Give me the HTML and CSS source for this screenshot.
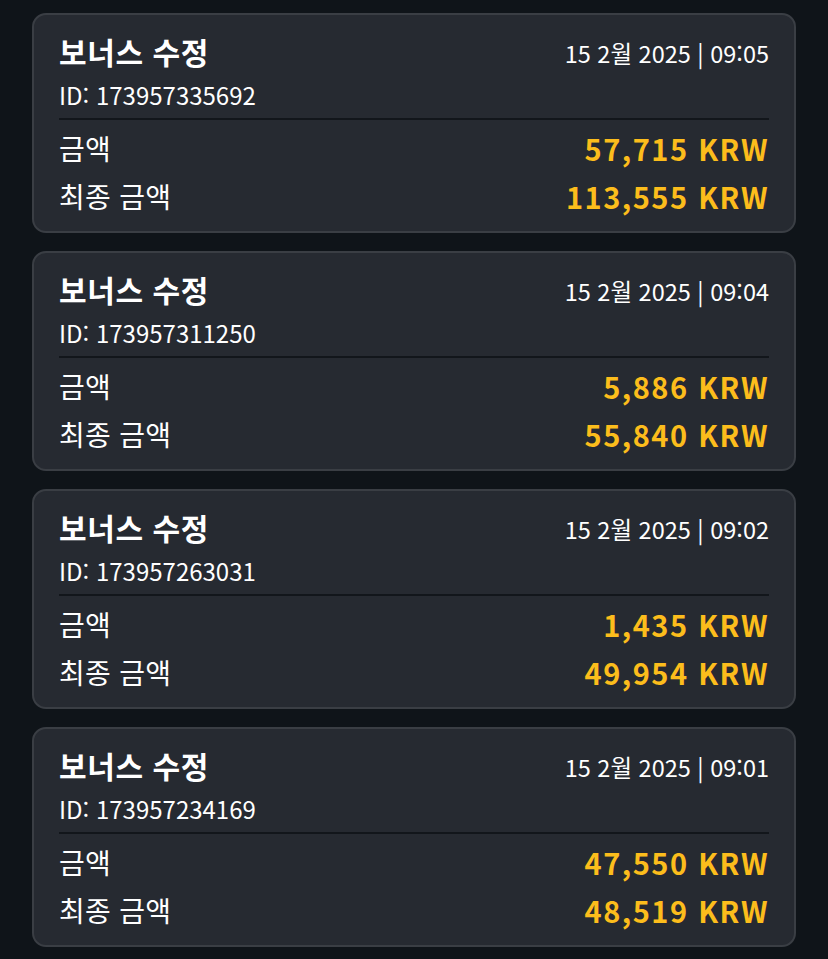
FILE: index.html
```
<html lang="ko">
<head>
    <meta charset="UTF-8">
    <title>보너스 내역</title>
    <link rel="stylesheet" href="styles.css">
</head>
<body>
<div class="list">
    <div class="card">
        <div class="head">
            <div class="title">보너스 수정</div>
            <div class="date">15 2월 2025 | 09:05</div>
        </div>
        <div class="id">ID: 173957335692</div>
        <div class="row">
            <span class="label">금액</span>
            <span class="amount">57,715 KRW</span>
        </div>
        <div class="row">
            <span class="label">최종 금액</span>
            <span class="amount">113,555 KRW</span>
        </div>
    </div>

    <div class="card">
        <div class="head">
            <div class="title">보너스 수정</div>
            <div class="date">15 2월 2025 | 09:04</div>
        </div>
        <div class="id">ID: 173957311250</div>
        <div class="row">
            <span class="label">금액</span>
            <span class="amount">5,886 KRW</span>
        </div>
        <div class="row">
            <span class="label">최종 금액</span>
            <span class="amount">55,840 KRW</span>
        </div>
    </div>

    <div class="card">
        <div class="head">
            <div class="title">보너스 수정</div>
            <div class="date">15 2월 2025 | 09:02</div>
        </div>
        <div class="id">ID: 173957263031</div>
        <div class="row">
            <span class="label">금액</span>
            <span class="amount">1,435 KRW</span>
        </div>
        <div class="row">
            <span class="label">최종 금액</span>
            <span class="amount">49,954 KRW</span>
        </div>
    </div>

    <div class="card">
        <div class="head">
            <div class="title">보너스 수정</div>
            <div class="date">15 2월 2025 | 09:01</div>
        </div>
        <div class="id">ID: 173957234169</div>
        <div class="row">
            <span class="label">금액</span>
            <span class="amount">47,550 KRW</span>
        </div>
        <div class="row">
            <span class="label">최종 금액</span>
            <span class="amount">48,519 KRW</span>
        </div>
    </div>
</div>
</body>
</html>
```

FILE: styles.css
```
* {
    margin: 0;
    padding: 0;
    box-sizing: border-box;
}

body {
    background: #0f1419;
    font-family: "Noto Sans CJK KR", "Noto Sans", sans-serif;
    color: #fff;
}

.list {
    display: flex;
    flex-direction: column;
    gap: 18px;
    padding: 13px 32px;
}

.card {
    background: #262a31;
    border: 2px solid #3a3e44;
    border-radius: 14px;
    padding: 18px 25px 11px;
}

.head {
    display: flex;
    justify-content: space-between;
    align-items: center;
    height: 36px;
    margin-bottom: 10px;
}

.title {
    font-size: 30px;
    font-weight: 700;
    line-height: 36px;
    letter-spacing: 0.6px;
}

.date {
    font-size: 23.5px;
    line-height: 36px;
    padding-top: 3px;
}

.id {
    font-size: 24px;
    line-height: 32px;
    padding-bottom: 7px;
    border-bottom: 2px solid #12161b;
    margin-bottom: 4px;
}

.row {
    display: flex;
    justify-content: space-between;
    align-items: center;
    height: 48px;
}

.label {
    font-size: 28px;
    letter-spacing: 0.3px;
}

.amount {
    font-size: 29px;
    font-weight: 700;
    color: #fcbd1c;
    letter-spacing: 1.5px;
}
```
